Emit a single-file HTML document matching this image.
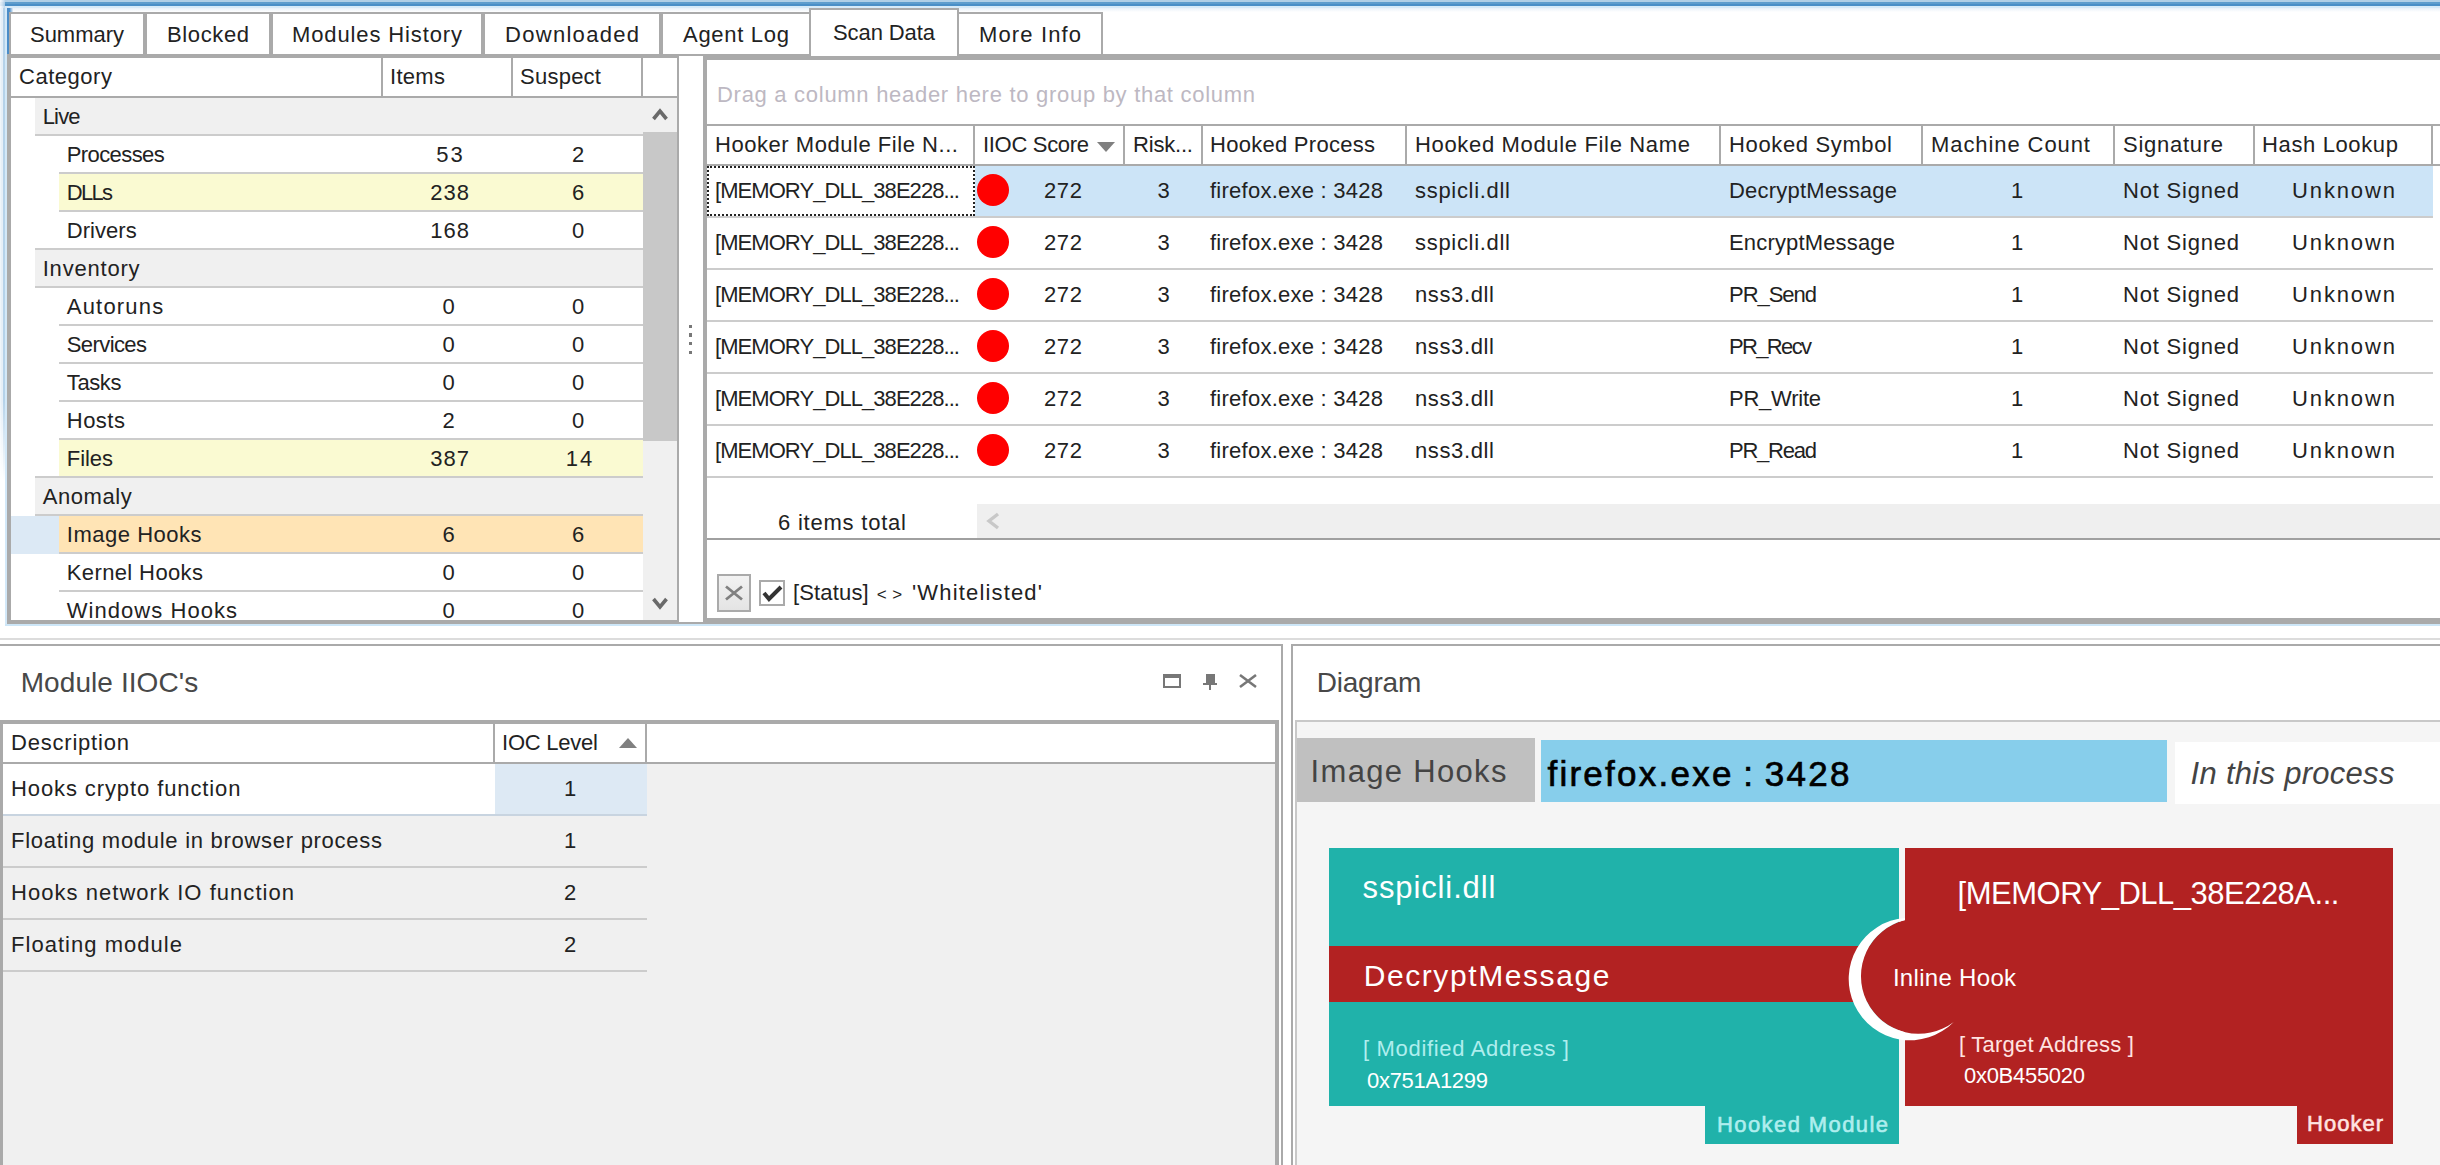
<!DOCTYPE html>
<html><head><meta charset="utf-8"><title>Scan Data</title>
<style>
html,body{margin:0;padding:0;background:#fff;}
body{width:2440px;height:1165px;position:relative;overflow:hidden;font-family:"Liberation Sans",sans-serif;}
body>div,body>svg{position:absolute;}
.t{white-space:nowrap;}
</style></head><body>
<div style="left:0px;top:0px;width:2440px;height:1165px;background:#ffffff;"></div>
<div style="left:0px;top:0px;width:2440px;height:12px;background:#fff;background:linear-gradient(#b0cfe6 0,#b0cfe6 2px,#5e9dcd 2px,#5e9dcd 4px,#4a8fc7 4px,#4a8fc7 6px,#d6eaf8 6px,#d6eaf8 8px,#e8f1f9 8px,#f4f8fc 10px,#fff 12px);"></div>
<div style="left:0px;top:0px;width:5px;height:8px;background:#fff;background:linear-gradient(90deg,#fff,#e8f0f8 40%,#b5d2ea);opacity:.85;"></div>
<div style="left:0px;top:8px;width:7px;height:616px;background:#fff;background:linear-gradient(90deg,#f8fbfd 0,#e6eff8 1px,#e6eff8 3px,#b5d2ea 3px,#b5d2ea 5px,#d3e8f8 5px,#d3e8f8 7px);"></div>
<div style="left:0px;top:400px;width:5px;height:224px;background:#fff;background:linear-gradient(rgba(255,255,255,0),#fff 36%);"></div>
<div style="left:7px;top:8px;width:2px;height:46px;background:#4a8cc8;"></div>
<div style="left:7px;top:8px;width:6px;height:4px;background:#4a8cc8;background:linear-gradient(90deg,#4a8cc8 40%,#e8f1f9);"></div>
<div style="left:7px;top:622px;width:2433px;height:2px;background:#aaaaaa;"></div>
<div style="left:5px;top:624px;width:2435px;height:2px;background:#cde6f7;"></div>
<div style="left:9px;top:12px;width:138px;height:44px;background:#aaaaaa;"></div>
<div style="left:11px;top:14px;width:132px;height:40px;background:#fff;"></div>
<div class="t" style="left:30.0px;top:24.38px;font-size:22px;line-height:22px;color:#222;letter-spacing:-0.025px;">Summary</div>
<div style="left:143px;top:12px;width:130px;height:44px;background:#aaaaaa;"></div>
<div style="left:147px;top:14px;width:122px;height:40px;background:#fff;"></div>
<div class="t" style="left:167.0px;top:24.38px;font-size:22px;line-height:22px;color:#222;letter-spacing:0.618px;">Blocked</div>
<div style="left:269px;top:12px;width:216px;height:44px;background:#aaaaaa;"></div>
<div style="left:273px;top:14px;width:208px;height:40px;background:#fff;"></div>
<div class="t" style="left:292.0px;top:24.38px;font-size:22px;line-height:22px;color:#222;letter-spacing:0.876px;">Modules History</div>
<div style="left:481px;top:12px;width:182px;height:44px;background:#aaaaaa;"></div>
<div style="left:485px;top:14px;width:174px;height:40px;background:#fff;"></div>
<div class="t" style="left:505.0px;top:24.38px;font-size:22px;line-height:22px;color:#222;letter-spacing:1.296px;">Downloaded</div>
<div style="left:659px;top:12px;width:152px;height:44px;background:#aaaaaa;"></div>
<div style="left:663px;top:14px;width:146px;height:40px;background:#fff;"></div>
<div class="t" style="left:683.0px;top:24.38px;font-size:22px;line-height:22px;color:#222;letter-spacing:0.708px;">Agent Log</div>
<div style="left:957px;top:12px;width:146px;height:44px;background:#aaaaaa;"></div>
<div style="left:959px;top:14px;width:142px;height:40px;background:#fff;"></div>
<div class="t" style="left:979.0px;top:24.38px;font-size:22px;line-height:22px;color:#222;letter-spacing:1.131px;">More Info</div>
<div style="left:7px;top:54px;width:2433px;height:2px;background:#aaaaaa;"></div>
<div style="left:809px;top:8px;width:150px;height:48px;background:#aaaaaa;"></div>
<div style="left:811px;top:10px;width:146px;height:46px;background:#fff;"></div>
<div class="t" style="left:833.0px;top:22.38px;font-size:22px;line-height:22px;color:#222;letter-spacing:-0.094px;">Scan Data</div>
<div style="left:7px;top:56px;width:672px;height:568px;background:#aaaaaa;"></div>
<div style="left:11px;top:58px;width:666px;height:562px;background:#fff;"></div>
<div style="left:11px;top:96px;width:666px;height:2px;background:#aaaaaa;"></div>
<div style="left:381px;top:58px;width:2px;height:38px;background:#aaaaaa;"></div>
<div style="left:511px;top:58px;width:2px;height:38px;background:#aaaaaa;"></div>
<div style="left:641px;top:58px;width:2px;height:38px;background:#aaaaaa;"></div>
<div class="t" style="left:19.0px;top:66.38px;font-size:22px;line-height:22px;color:#222;letter-spacing:0.530px;">Category</div>
<div class="t" style="left:390.0px;top:66.38px;font-size:22px;line-height:22px;color:#222;letter-spacing:0.298px;">Items</div>
<div class="t" style="left:520.0px;top:66.38px;font-size:22px;line-height:22px;color:#222;letter-spacing:0.248px;">Suspect</div>
<div style="left:643px;top:98px;width:34px;height:522px;background:#f0f0f0;"></div>
<div style="left:35px;top:98px;width:642px;height:36px;background:#f0f0f0;"></div>
<div style="left:35px;top:134px;width:608px;height:2px;background:#cccccc;"></div>
<div class="t" style="left:42.7px;top:106.38px;font-size:22px;line-height:22px;color:#222;letter-spacing:-0.827px;">Live</div>
<div style="left:59px;top:172px;width:584px;height:2px;background:#cccccc;"></div>
<div class="t" style="left:66.8px;top:144.38px;font-size:22px;line-height:22px;color:#222;letter-spacing:-0.604px;">Processes</div>
<div class="t" style="left:436.3px;top:144.38px;font-size:22px;line-height:22px;color:#222;letter-spacing:1.980px;">53</div>
<div class="t" style="left:571.9px;top:144.38px;font-size:22px;line-height:22px;color:#222;letter-spacing:1.980px;">2</div>
<div style="left:59px;top:174px;width:584px;height:36px;background:#fafad2;"></div>
<div style="left:59px;top:210px;width:584px;height:2px;background:#cccccc;"></div>
<div class="t" style="left:66.8px;top:182.38px;font-size:22px;line-height:22px;color:#222;letter-spacing:-1.727px;">DLLs</div>
<div class="t" style="left:430.2px;top:182.38px;font-size:22px;line-height:22px;color:#222;letter-spacing:0.990px;">238</div>
<div class="t" style="left:571.9px;top:182.38px;font-size:22px;line-height:22px;color:#222;letter-spacing:1.980px;">6</div>
<div style="left:35px;top:248px;width:608px;height:2px;background:#cccccc;"></div>
<div class="t" style="left:66.8px;top:220.38px;font-size:22px;line-height:22px;color:#222;letter-spacing:0.036px;">Drivers</div>
<div class="t" style="left:430.2px;top:220.38px;font-size:22px;line-height:22px;color:#222;letter-spacing:0.990px;">168</div>
<div class="t" style="left:571.9px;top:220.38px;font-size:22px;line-height:22px;color:#222;letter-spacing:1.980px;">0</div>
<div style="left:35px;top:250px;width:608px;height:36px;background:#f0f0f0;"></div>
<div style="left:35px;top:286px;width:608px;height:2px;background:#cccccc;"></div>
<div class="t" style="left:42.7px;top:258.38px;font-size:22px;line-height:22px;color:#222;letter-spacing:0.798px;">Inventory</div>
<div style="left:59px;top:324px;width:584px;height:2px;background:#cccccc;"></div>
<div class="t" style="left:66.8px;top:296.38px;font-size:22px;line-height:22px;color:#222;letter-spacing:1.189px;">Autoruns</div>
<div class="t" style="left:442.4px;top:296.38px;font-size:22px;line-height:22px;color:#222;letter-spacing:1.980px;">0</div>
<div class="t" style="left:571.9px;top:296.38px;font-size:22px;line-height:22px;color:#222;letter-spacing:1.980px;">0</div>
<div style="left:59px;top:362px;width:584px;height:2px;background:#cccccc;"></div>
<div class="t" style="left:66.8px;top:334.38px;font-size:22px;line-height:22px;color:#222;letter-spacing:-0.597px;">Services</div>
<div class="t" style="left:442.4px;top:334.38px;font-size:22px;line-height:22px;color:#222;letter-spacing:1.980px;">0</div>
<div class="t" style="left:571.9px;top:334.38px;font-size:22px;line-height:22px;color:#222;letter-spacing:1.980px;">0</div>
<div style="left:59px;top:400px;width:584px;height:2px;background:#cccccc;"></div>
<div class="t" style="left:66.8px;top:372.38px;font-size:22px;line-height:22px;color:#222;letter-spacing:-0.414px;">Tasks</div>
<div class="t" style="left:442.4px;top:372.38px;font-size:22px;line-height:22px;color:#222;letter-spacing:1.980px;">0</div>
<div class="t" style="left:571.9px;top:372.38px;font-size:22px;line-height:22px;color:#222;letter-spacing:1.980px;">0</div>
<div style="left:59px;top:438px;width:584px;height:2px;background:#cccccc;"></div>
<div class="t" style="left:66.8px;top:410.38px;font-size:22px;line-height:22px;color:#222;letter-spacing:0.461px;">Hosts</div>
<div class="t" style="left:442.4px;top:410.38px;font-size:22px;line-height:22px;color:#222;letter-spacing:1.980px;">2</div>
<div class="t" style="left:571.9px;top:410.38px;font-size:22px;line-height:22px;color:#222;letter-spacing:1.980px;">0</div>
<div style="left:59px;top:440px;width:584px;height:36px;background:#fafad2;"></div>
<div style="left:35px;top:476px;width:608px;height:2px;background:#cccccc;"></div>
<div class="t" style="left:66.8px;top:448.38px;font-size:22px;line-height:22px;color:#222;letter-spacing:-0.068px;">Files</div>
<div class="t" style="left:430.2px;top:448.38px;font-size:22px;line-height:22px;color:#222;letter-spacing:0.990px;">387</div>
<div class="t" style="left:565.8px;top:448.38px;font-size:22px;line-height:22px;color:#222;letter-spacing:1.980px;">14</div>
<div style="left:35px;top:478px;width:608px;height:36px;background:#f0f0f0;"></div>
<div style="left:35px;top:514px;width:608px;height:2px;background:#cccccc;"></div>
<div class="t" style="left:42.7px;top:486.38px;font-size:22px;line-height:22px;color:#222;letter-spacing:0.564px;">Anomaly</div>
<div style="left:59px;top:516px;width:584px;height:36px;background:#ffe4b5;"></div>
<div style="left:11px;top:516px;width:48px;height:38px;background:#dce9f5;"></div>
<div style="left:59px;top:552px;width:584px;height:2px;background:#cccccc;"></div>
<div class="t" style="left:66.8px;top:524.38px;font-size:22px;line-height:22px;color:#222;letter-spacing:0.516px;">Image Hooks</div>
<div class="t" style="left:442.4px;top:524.38px;font-size:22px;line-height:22px;color:#222;letter-spacing:1.980px;">6</div>
<div class="t" style="left:571.9px;top:524.38px;font-size:22px;line-height:22px;color:#222;letter-spacing:1.980px;">6</div>
<div style="left:59px;top:590px;width:584px;height:2px;background:#cccccc;"></div>
<div class="t" style="left:66.8px;top:562.38px;font-size:22px;line-height:22px;color:#222;letter-spacing:0.374px;">Kernel Hooks</div>
<div class="t" style="left:442.4px;top:562.38px;font-size:22px;line-height:22px;color:#222;letter-spacing:1.980px;">0</div>
<div class="t" style="left:571.9px;top:562.38px;font-size:22px;line-height:22px;color:#222;letter-spacing:1.980px;">0</div>
<div class="t" style="left:66.8px;top:600.38px;font-size:22px;line-height:22px;color:#222;letter-spacing:1.038px;">Windows Hooks</div>
<div class="t" style="left:442.4px;top:600.38px;font-size:22px;line-height:22px;color:#222;letter-spacing:1.980px;">0</div>
<div class="t" style="left:571.9px;top:600.38px;font-size:22px;line-height:22px;color:#222;letter-spacing:1.980px;">0</div>
<div style="left:643px;top:132px;width:34px;height:309px;background:#c8c8c8;"></div>
<svg style="left:647px;top:106px" width="26" height="16" viewBox="0 0 26 16"><path d="M6.5 13 L13 5 L19.5 13" fill="none" stroke="#6a6a6a" stroke-width="3.6"/></svg>
<svg style="left:647px;top:596px" width="26" height="16" viewBox="0 0 26 16"><path d="M6.5 3 L13 11 L19.5 3" fill="none" stroke="#6a6a6a" stroke-width="3.6"/></svg>
<div style="left:688.7px;top:324.5px;width:3.5px;height:3.5px;background:#787878;"></div>
<div style="left:688.7px;top:333.2px;width:3.5px;height:3.5px;background:#787878;"></div>
<div style="left:688.7px;top:341.9px;width:3.5px;height:3.5px;background:#787878;"></div>
<div style="left:688.7px;top:350.6px;width:3.5px;height:3.5px;background:#787878;"></div>
<div style="left:703px;top:56px;width:1737px;height:568px;background:#aaaaaa;"></div>
<div style="left:707px;top:60px;width:1733px;height:558px;background:#fff;"></div>
<div class="t" style="left:717.0px;top:84.38px;font-size:22px;line-height:22px;color:#bdb8c2;letter-spacing:0.711px;">Drag a column header here to group by that column</div>
<div style="left:707px;top:124px;width:1733px;height:2px;background:#aaaaaa;"></div>
<div style="left:707px;top:164px;width:1733px;height:2px;background:#aaaaaa;"></div>
<div style="left:973px;top:126px;width:2px;height:38px;background:#aaaaaa;"></div>
<div style="left:1123px;top:126px;width:2px;height:38px;background:#aaaaaa;"></div>
<div style="left:1201px;top:126px;width:2px;height:38px;background:#aaaaaa;"></div>
<div style="left:1405px;top:126px;width:2px;height:38px;background:#aaaaaa;"></div>
<div style="left:1719px;top:126px;width:2px;height:38px;background:#aaaaaa;"></div>
<div style="left:1921px;top:126px;width:2px;height:38px;background:#aaaaaa;"></div>
<div style="left:2113px;top:126px;width:2px;height:38px;background:#aaaaaa;"></div>
<div style="left:2253px;top:126px;width:2px;height:38px;background:#aaaaaa;"></div>
<div style="left:2431px;top:126px;width:2px;height:38px;background:#aaaaaa;"></div>
<div class="t" style="left:715.0px;top:134.38px;font-size:22px;line-height:22px;color:#222;letter-spacing:0.540px;">Hooker Module File N...</div>
<div class="t" style="left:983.0px;top:134.38px;font-size:22px;line-height:22px;color:#222;letter-spacing:-0.314px;">IIOC Score</div>
<div class="t" style="left:1133.0px;top:134.38px;font-size:22px;line-height:22px;color:#222;letter-spacing:-0.189px;">Risk...</div>
<div class="t" style="left:1210.0px;top:134.38px;font-size:22px;line-height:22px;color:#222;letter-spacing:0.274px;">Hooked Process</div>
<div class="t" style="left:1415.0px;top:134.38px;font-size:22px;line-height:22px;color:#222;letter-spacing:0.660px;">Hooked Module File Name</div>
<div class="t" style="left:1729.0px;top:134.38px;font-size:22px;line-height:22px;color:#222;letter-spacing:0.640px;">Hooked Symbol</div>
<div class="t" style="left:1931.0px;top:134.38px;font-size:22px;line-height:22px;color:#222;letter-spacing:0.917px;">Machine Count</div>
<div class="t" style="left:2123.0px;top:134.38px;font-size:22px;line-height:22px;color:#222;letter-spacing:0.725px;">Signature</div>
<div class="t" style="left:2262.0px;top:134.38px;font-size:22px;line-height:22px;color:#222;letter-spacing:0.633px;">Hash Lookup</div>
<svg style="left:1096px;top:141px" width="20" height="12" viewBox="0 0 20 12"><path d="M1 1 H19 L10 11 Z" fill="#808080"/></svg>
<div style="left:707px;top:166px;width:1726px;height:50px;background:#cce4f7;"></div>
<div style="left:707px;top:166px;width:268px;height:50px;background:#fff;outline:2px dotted #222;outline-offset:-2px;"></div>
<div style="left:707px;top:216px;width:1726px;height:2px;background:#cccccc;"></div>
<div class="t" style="left:715.0px;top:180.38px;font-size:22px;line-height:22px;color:#222;letter-spacing:-0.938px;">[MEMORY_DLL_38E228...</div>
<div style="left:977px;top:174px;width:32px;height:32px;border-radius:50%;background:#ff0000"></div>
<div class="t" style="left:1044.0px;top:180.38px;font-size:22px;line-height:22px;color:#222;letter-spacing:0.636px;">272</div>
<div class="t" style="left:1157.4px;top:180.38px;font-size:22px;line-height:22px;color:#222;letter-spacing:1.980px;">3</div>
<div class="t" style="left:1210.0px;top:180.38px;font-size:22px;line-height:22px;color:#222;letter-spacing:0.247px;">firefox.exe : 3428</div>
<div class="t" style="left:1415.0px;top:180.38px;font-size:22px;line-height:22px;color:#222;letter-spacing:0.696px;">sspicli.dll</div>
<div class="t" style="left:1729.0px;top:180.38px;font-size:22px;line-height:22px;color:#222;letter-spacing:0.224px;">DecryptMessage</div>
<div class="t" style="left:2010.9px;top:180.38px;font-size:22px;line-height:22px;color:#222;letter-spacing:1.980px;">1</div>
<div class="t" style="left:2123.0px;top:180.38px;font-size:22px;line-height:22px;color:#222;letter-spacing:0.792px;">Not Signed</div>
<div class="t" style="left:2292.0px;top:180.38px;font-size:22px;line-height:22px;color:#222;letter-spacing:1.877px;">Unknown</div>
<div style="left:707px;top:268px;width:1726px;height:2px;background:#cccccc;"></div>
<div class="t" style="left:715.0px;top:232.38px;font-size:22px;line-height:22px;color:#222;letter-spacing:-0.938px;">[MEMORY_DLL_38E228...</div>
<div style="left:977px;top:226px;width:32px;height:32px;border-radius:50%;background:#ff0000"></div>
<div class="t" style="left:1044.0px;top:232.38px;font-size:22px;line-height:22px;color:#222;letter-spacing:0.636px;">272</div>
<div class="t" style="left:1157.4px;top:232.38px;font-size:22px;line-height:22px;color:#222;letter-spacing:1.980px;">3</div>
<div class="t" style="left:1210.0px;top:232.38px;font-size:22px;line-height:22px;color:#222;letter-spacing:0.247px;">firefox.exe : 3428</div>
<div class="t" style="left:1415.0px;top:232.38px;font-size:22px;line-height:22px;color:#222;letter-spacing:0.696px;">sspicli.dll</div>
<div class="t" style="left:1729.0px;top:232.38px;font-size:22px;line-height:22px;color:#222;letter-spacing:0.163px;">EncryptMessage</div>
<div class="t" style="left:2010.9px;top:232.38px;font-size:22px;line-height:22px;color:#222;letter-spacing:1.980px;">1</div>
<div class="t" style="left:2123.0px;top:232.38px;font-size:22px;line-height:22px;color:#222;letter-spacing:0.792px;">Not Signed</div>
<div class="t" style="left:2292.0px;top:232.38px;font-size:22px;line-height:22px;color:#222;letter-spacing:1.877px;">Unknown</div>
<div style="left:707px;top:320px;width:1726px;height:2px;background:#cccccc;"></div>
<div class="t" style="left:715.0px;top:284.38px;font-size:22px;line-height:22px;color:#222;letter-spacing:-0.938px;">[MEMORY_DLL_38E228...</div>
<div style="left:977px;top:278px;width:32px;height:32px;border-radius:50%;background:#ff0000"></div>
<div class="t" style="left:1044.0px;top:284.38px;font-size:22px;line-height:22px;color:#222;letter-spacing:0.636px;">272</div>
<div class="t" style="left:1157.4px;top:284.38px;font-size:22px;line-height:22px;color:#222;letter-spacing:1.980px;">3</div>
<div class="t" style="left:1210.0px;top:284.38px;font-size:22px;line-height:22px;color:#222;letter-spacing:0.247px;">firefox.exe : 3428</div>
<div class="t" style="left:1415.0px;top:284.38px;font-size:22px;line-height:22px;color:#222;letter-spacing:0.626px;">nss3.dll</div>
<div class="t" style="left:1729.0px;top:284.38px;font-size:22px;line-height:22px;color:#222;letter-spacing:-1.033px;">PR_Send</div>
<div class="t" style="left:2010.9px;top:284.38px;font-size:22px;line-height:22px;color:#222;letter-spacing:1.980px;">1</div>
<div class="t" style="left:2123.0px;top:284.38px;font-size:22px;line-height:22px;color:#222;letter-spacing:0.792px;">Not Signed</div>
<div class="t" style="left:2292.0px;top:284.38px;font-size:22px;line-height:22px;color:#222;letter-spacing:1.877px;">Unknown</div>
<div style="left:707px;top:372px;width:1726px;height:2px;background:#cccccc;"></div>
<div class="t" style="left:715.0px;top:336.38px;font-size:22px;line-height:22px;color:#222;letter-spacing:-0.938px;">[MEMORY_DLL_38E228...</div>
<div style="left:977px;top:330px;width:32px;height:32px;border-radius:50%;background:#ff0000"></div>
<div class="t" style="left:1044.0px;top:336.38px;font-size:22px;line-height:22px;color:#222;letter-spacing:0.636px;">272</div>
<div class="t" style="left:1157.4px;top:336.38px;font-size:22px;line-height:22px;color:#222;letter-spacing:1.980px;">3</div>
<div class="t" style="left:1210.0px;top:336.38px;font-size:22px;line-height:22px;color:#222;letter-spacing:0.247px;">firefox.exe : 3428</div>
<div class="t" style="left:1415.0px;top:336.38px;font-size:22px;line-height:22px;color:#222;letter-spacing:0.626px;">nss3.dll</div>
<div class="t" style="left:1729.0px;top:336.38px;font-size:22px;line-height:22px;color:#222;letter-spacing:-1.657px;">PR_Recv</div>
<div class="t" style="left:2010.9px;top:336.38px;font-size:22px;line-height:22px;color:#222;letter-spacing:1.980px;">1</div>
<div class="t" style="left:2123.0px;top:336.38px;font-size:22px;line-height:22px;color:#222;letter-spacing:0.792px;">Not Signed</div>
<div class="t" style="left:2292.0px;top:336.38px;font-size:22px;line-height:22px;color:#222;letter-spacing:1.877px;">Unknown</div>
<div style="left:707px;top:424px;width:1726px;height:2px;background:#cccccc;"></div>
<div class="t" style="left:715.0px;top:388.38px;font-size:22px;line-height:22px;color:#222;letter-spacing:-0.938px;">[MEMORY_DLL_38E228...</div>
<div style="left:977px;top:382px;width:32px;height:32px;border-radius:50%;background:#ff0000"></div>
<div class="t" style="left:1044.0px;top:388.38px;font-size:22px;line-height:22px;color:#222;letter-spacing:0.636px;">272</div>
<div class="t" style="left:1157.4px;top:388.38px;font-size:22px;line-height:22px;color:#222;letter-spacing:1.980px;">3</div>
<div class="t" style="left:1210.0px;top:388.38px;font-size:22px;line-height:22px;color:#222;letter-spacing:0.247px;">firefox.exe : 3428</div>
<div class="t" style="left:1415.0px;top:388.38px;font-size:22px;line-height:22px;color:#222;letter-spacing:0.626px;">nss3.dll</div>
<div class="t" style="left:1729.0px;top:388.38px;font-size:22px;line-height:22px;color:#222;letter-spacing:-0.250px;">PR_Write</div>
<div class="t" style="left:2010.9px;top:388.38px;font-size:22px;line-height:22px;color:#222;letter-spacing:1.980px;">1</div>
<div class="t" style="left:2123.0px;top:388.38px;font-size:22px;line-height:22px;color:#222;letter-spacing:0.792px;">Not Signed</div>
<div class="t" style="left:2292.0px;top:388.38px;font-size:22px;line-height:22px;color:#222;letter-spacing:1.877px;">Unknown</div>
<div style="left:707px;top:476px;width:1726px;height:2px;background:#cccccc;"></div>
<div class="t" style="left:715.0px;top:440.38px;font-size:22px;line-height:22px;color:#222;letter-spacing:-0.938px;">[MEMORY_DLL_38E228...</div>
<div style="left:977px;top:434px;width:32px;height:32px;border-radius:50%;background:#ff0000"></div>
<div class="t" style="left:1044.0px;top:440.38px;font-size:22px;line-height:22px;color:#222;letter-spacing:0.636px;">272</div>
<div class="t" style="left:1157.4px;top:440.38px;font-size:22px;line-height:22px;color:#222;letter-spacing:1.980px;">3</div>
<div class="t" style="left:1210.0px;top:440.38px;font-size:22px;line-height:22px;color:#222;letter-spacing:0.247px;">firefox.exe : 3428</div>
<div class="t" style="left:1415.0px;top:440.38px;font-size:22px;line-height:22px;color:#222;letter-spacing:0.626px;">nss3.dll</div>
<div class="t" style="left:1729.0px;top:440.38px;font-size:22px;line-height:22px;color:#222;letter-spacing:-1.236px;">PR_Read</div>
<div class="t" style="left:2010.9px;top:440.38px;font-size:22px;line-height:22px;color:#222;letter-spacing:1.980px;">1</div>
<div class="t" style="left:2123.0px;top:440.38px;font-size:22px;line-height:22px;color:#222;letter-spacing:0.792px;">Not Signed</div>
<div class="t" style="left:2292.0px;top:440.38px;font-size:22px;line-height:22px;color:#222;letter-spacing:1.877px;">Unknown</div>
<div class="t" style="left:778.0px;top:512.38px;font-size:22px;line-height:22px;color:#222;letter-spacing:0.781px;">6 items total</div>
<div style="left:977px;top:504px;width:1463px;height:34px;background:#efefef;"></div>
<svg style="left:985px;top:512px" width="16" height="18" viewBox="0 0 16 18"><path d="M13 2 L4 9 L13 16" fill="none" stroke="#c8c8c8" stroke-width="3.4"/></svg>
<div style="left:707px;top:538px;width:1733px;height:2px;background:#a0a0a0;"></div>
<div style="left:717px;top:574px;width:34px;height:38px;background:#aaaaaa;"></div>
<div style="left:719px;top:576px;width:30px;height:34px;background:#ececec;background:linear-gradient(#f2f2f2,#e4e4e4);"></div>
<svg style="left:723px;top:581px" width="22" height="24" viewBox="0 0 22 24"><path d="M3 5.5 L19 18.5 M19 5.5 L3 18.5" fill="none" stroke="#808080" stroke-width="2.8"/></svg>
<div style="left:759px;top:580px;width:26px;height:26px;background:#aaaaaa;"></div>
<div style="left:761px;top:582px;width:22px;height:22px;background:#fff;"></div>
<svg style="left:761px;top:582px" width="22" height="22" viewBox="0 0 22 22"><path d="M3 11 L8 17 L20 5" fill="none" stroke="#333" stroke-width="4"/></svg>
<div class="t" style="left:793.0px;top:582.38px;font-size:22px;line-height:22px;color:#222;letter-spacing:0.155px;">[Status]</div>
<div class="t" style="left:876.7px;top:586.11px;font-size:17px;line-height:17px;color:#222;letter-spacing:1.102px;">&lt;</div>
<div class="t" style="left:892.2px;top:586.11px;font-size:17px;line-height:17px;color:#222;letter-spacing:2.102px;">&gt;</div>
<div class="t" style="left:912.0px;top:582.38px;font-size:22px;line-height:22px;color:#222;letter-spacing:1.165px;">'Whitelisted'</div>
<div style="left:0px;top:638px;width:2440px;height:2px;background:#dcdcdc;"></div>
<div style="left:0px;top:644px;width:1283px;height:521px;background:#aaaaaa;"></div>
<div style="left:0px;top:646px;width:1281px;height:519px;background:#fff;"></div>
<div class="t" style="left:20.7px;top:669.30px;font-size:28px;line-height:28px;color:#484848;letter-spacing:0.083px;">Module IIOC's</div>
<svg style="left:1160px;top:670px" width="100" height="24" viewBox="0 0 100 24"><path d="M4 5 H20 V17 H4 Z" fill="none" stroke="#777" stroke-width="2"/><rect x="3" y="4" width="18" height="4" fill="#777"/><path d="M46 4 H55 V14 H46 Z M43 13 H57 V15 H43 Z M49 15 H51 V20 H49 Z" fill="#777"/><path d="M80 5 L96 17 M96 5 L80 17" fill="none" stroke="#777" stroke-width="2.6"/></svg>
<div style="left:0px;top:720px;width:1279px;height:445px;background:#aaaaaa;"></div>
<div style="left:3px;top:724px;width:1272px;height:441px;background:#f0f0f0;"></div>
<div style="left:3px;top:724px;width:1272px;height:38px;background:#fff;"></div>
<div style="left:3px;top:762px;width:1272px;height:2px;background:#aaaaaa;"></div>
<div style="left:493px;top:724px;width:2px;height:38px;background:#aaaaaa;"></div>
<div style="left:645px;top:724px;width:2px;height:38px;background:#aaaaaa;"></div>
<div class="t" style="left:11.0px;top:732.38px;font-size:22px;line-height:22px;color:#222;letter-spacing:0.793px;">Description</div>
<div class="t" style="left:502.0px;top:732.38px;font-size:22px;line-height:22px;color:#222;letter-spacing:-0.230px;">IOC Level</div>
<svg style="left:618px;top:737px" width="20" height="12" viewBox="0 0 20 12"><path d="M1 11 H19 L10 1 Z" fill="#808080"/></svg>
<div style="left:3px;top:764px;width:492px;height:50px;background:#fff;"></div>
<div style="left:495px;top:764px;width:152px;height:50px;background:#dde9f4;"></div>
<div style="left:3px;top:814px;width:644px;height:2px;background:#c8d4e0;"></div>
<div class="t" style="left:11.0px;top:778.38px;font-size:22px;line-height:22px;color:#222;letter-spacing:0.897px;">Hooks crypto function</div>
<div class="t" style="left:563.9px;top:778.38px;font-size:22px;line-height:22px;color:#222;letter-spacing:1.980px;">1</div>
<div style="left:3px;top:866px;width:644px;height:2px;background:#cccccc;"></div>
<div class="t" style="left:11.0px;top:830.38px;font-size:22px;line-height:22px;color:#222;letter-spacing:0.718px;">Floating module in browser process</div>
<div class="t" style="left:563.9px;top:830.38px;font-size:22px;line-height:22px;color:#222;letter-spacing:1.980px;">1</div>
<div style="left:3px;top:918px;width:644px;height:2px;background:#cccccc;"></div>
<div class="t" style="left:11.0px;top:882.38px;font-size:22px;line-height:22px;color:#222;letter-spacing:1.040px;">Hooks network IO function</div>
<div class="t" style="left:563.9px;top:882.38px;font-size:22px;line-height:22px;color:#222;letter-spacing:1.980px;">2</div>
<div style="left:3px;top:970px;width:644px;height:2px;background:#cccccc;"></div>
<div class="t" style="left:11.0px;top:934.38px;font-size:22px;line-height:22px;color:#222;letter-spacing:1.031px;">Floating module</div>
<div class="t" style="left:563.9px;top:934.38px;font-size:22px;line-height:22px;color:#222;letter-spacing:1.980px;">2</div>
<div style="left:1291px;top:644px;width:1149px;height:521px;background:#aaaaaa;"></div>
<div style="left:1293px;top:646px;width:1147px;height:519px;background:#fff;"></div>
<div class="t" style="left:1316.7px;top:669.30px;font-size:28px;line-height:28px;color:#484848;letter-spacing:-0.215px;">Diagram</div>
<div style="left:1295px;top:720px;width:1145px;height:445px;background:#c8c8c8;"></div>
<div style="left:1297px;top:722px;width:1143px;height:443px;background:#f5f5f5;"></div>
<div style="left:1297px;top:738px;width:238px;height:64px;background:#c0c0c0;"></div>
<div class="t" style="left:1310.6px;top:755.76px;font-size:31px;line-height:31px;color:#444;letter-spacing:1.315px;">Image Hooks</div>
<div style="left:1541px;top:740px;width:626px;height:62px;background:#87ceeb;"></div>
<div class="t" style="left:1547.4px;top:756.37px;font-size:35px;line-height:35px;color:#000;letter-spacing:2.268px;word-spacing:-2.456px;-webkit-text-stroke:0.7px #000;">firefox.exe : 3428</div>
<div style="left:2175px;top:742px;width:265px;height:62px;background:#fff;"></div>
<div class="t" style="left:2190.6px;top:757.76px;font-size:31px;line-height:31px;color:#444;letter-spacing:0.280px;font-style:italic;">In this process</div>
<div style="left:1329px;top:848px;width:570px;height:258px;background:#20b2aa;"></div>
<div style="left:1329px;top:946px;width:570px;height:56px;background:#b22222;"></div>
<div style="left:1705px;top:1106px;width:194px;height:38px;background:#20b2aa;"></div>
<div style="left:2297px;top:1106px;width:96px;height:38px;background:#b22222;"></div>
<svg style="left:1840px;top:910px" width="130" height="140" viewBox="1840 910 130 140"><circle cx="1918.7" cy="976.1" r="57.7" fill="#b22222"/></svg>
<div style="left:1905px;top:848px;width:488px;height:258px;background:#b22222;"></div>
<svg style="left:1840px;top:910px" width="130" height="140" viewBox="1840 910 130 140"><path d="M1905.00 917.90 A61.3 61.3 0 1 0 1953.76 1021.92 A57.7 57.7 0 1 1 1905.00 920.05 Z" fill="#fff"/></svg>
<div class="t" style="left:1362.6px;top:871.76px;font-size:31px;line-height:31px;color:#fff;letter-spacing:0.876px;">sspicli.dll</div>
<div class="t" style="left:1363.7px;top:960.61px;font-size:30px;line-height:30px;color:#fff;letter-spacing:1.585px;">DecryptMessage</div>
<div class="t" style="left:1363.0px;top:1038.38px;font-size:22px;line-height:22px;color:#afeeee;letter-spacing:0.672px;">[ Modified Address ]</div>
<div class="t" style="left:1367.0px;top:1070.38px;font-size:22px;line-height:22px;color:#fff;letter-spacing:-0.287px;">0x751A1299</div>
<div class="t" style="left:1717.0px;top:1113.88px;font-size:22px;line-height:22px;color:#afeeee;letter-spacing:1.407px;-webkit-text-stroke:0.6px #afeeee;">Hooked Module</div>
<div class="t" style="left:1957.6px;top:877.76px;font-size:31px;line-height:31px;color:#fff;letter-spacing:-0.501px;">[MEMORY_DLL_38E228A...</div>
<div class="t" style="left:1892.9px;top:965.68px;font-size:24px;line-height:24px;color:#fff;letter-spacing:0.309px;">Inline Hook</div>
<div class="t" style="left:1959.0px;top:1034.38px;font-size:22px;line-height:22px;color:#ffe4e1;letter-spacing:0.246px;">[ Target Address ]</div>
<div class="t" style="left:1964.0px;top:1065.38px;font-size:22px;line-height:22px;color:#fff;letter-spacing:-0.287px;">0x0B455020</div>
<div class="t" style="left:2307.0px;top:1113.38px;font-size:22px;line-height:22px;color:#ffe4e1;letter-spacing:1.012px;-webkit-text-stroke:0.6px #ffe4e1;">Hooker</div>
</body></html>
